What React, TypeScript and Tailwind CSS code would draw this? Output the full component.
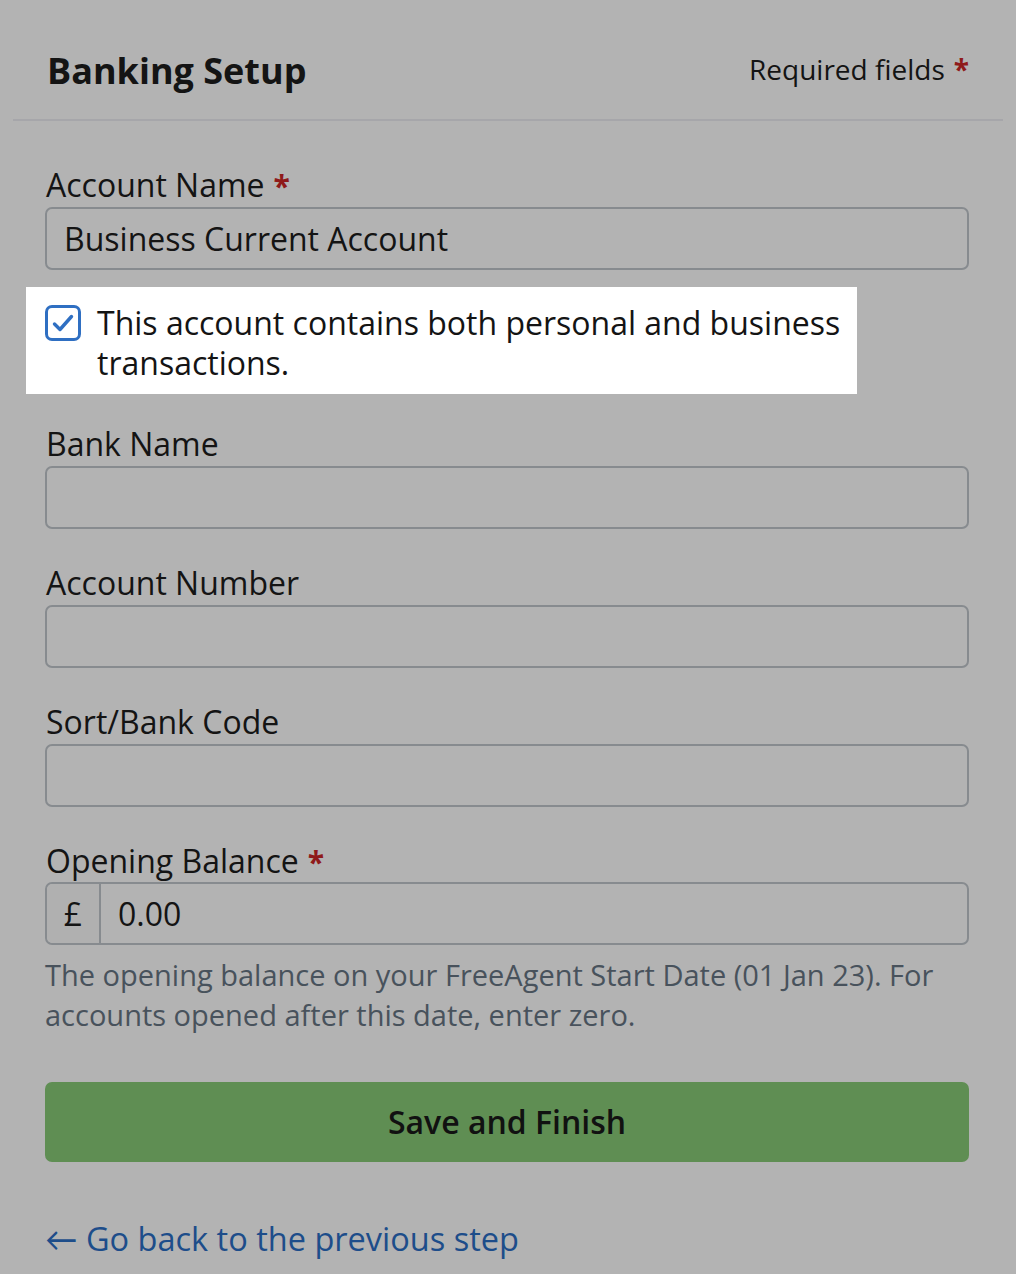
import React from "react";

function Label({ text, required }: { text: string; required?: boolean }) {
  return (
    <div className="h-[40px] leading-[40px] text-[32px] text-[#141414] ml-[1px]">
      {text}
      {required && <span className="ml-[9px] text-[#8f1a1a] font-bold text-[30px]">*</span>}
    </div>
  );
}

function Input({ value }: { value?: string }) {
  return (
    <div className="mt-[2px] h-[63px] rounded-[7px] border-2 border-[#878b8f] flex items-center px-[17px] text-[32px] text-[#141414]">
      {value}
    </div>
  );
}

export default function App() {
  return (
    <div
      className="w-[1016px] h-[1274px] bg-[#b3b3b3] overflow-hidden"
      style={{ fontFamily: "'Open Sans', Lato, sans-serif" }}
    >
      <div className="h-[121px] mx-[13px] border-b-2 border-[#a6a6aa] flex items-center justify-between pl-[34px] pr-[34px] pt-[22px]">
        <div className="text-[36px] font-bold text-[#141414]">Banking Setup</div>
        <div className="text-[28px] text-[#141414] -mt-[4px]">
          Required fields<span className="ml-[9px] text-[#8f1a1a] font-bold">*</span>
        </div>
      </div>

      <div className="pl-[45px] pr-[47px] pt-[44px]">
        <Label text="Account Name" required />
        <Input value="Business Current Account" />

        <div className="mt-[17px] -ml-[19px] w-[831px] bg-white pl-[19px] pt-[18px] pb-[11px] flex items-start">
          <div className="w-[36px] h-[36px] rounded-[7px] border-[3px] border-[#2f6fc2] flex items-center justify-center shrink-0">
            <svg width="24" height="20" viewBox="0 0 24 20" fill="none">
              <path d="M3.5 11 L9 16.5 L20.5 3.5" stroke="#2f6fc2" strokeWidth="3.4" strokeLinecap="round" strokeLinejoin="round" />
            </svg>
          </div>
          <div className="ml-[16px] text-[32px] leading-[40px] text-[#141414] w-[770px] -mt-[2px]">
            This account contains both personal and business transactions.
          </div>
        </div>

        <div className="mt-[30px]">
          <Label text="Bank Name" />
          <Input />
        </div>
        <div className="mt-[34px]">
          <Label text="Account Number" />
          <Input />
        </div>
        <div className="mt-[34px]">
          <Label text="Sort/Bank Code" />
          <Input />
        </div>
        <div className="mt-[34px]">
          <Label text="Opening Balance" required />
          <div className="mt-[1px] h-[63px] rounded-[7px] border-2 border-[#878b8f] flex items-stretch text-[32px] text-[#141414]">
            <div className="w-[54px] border-r-2 border-[#878b8f] flex items-center justify-center bg-[#b0b0b0] rounded-l-[6px]">
              £
            </div>
            <div className="flex items-center pl-[17px]">0.00</div>
          </div>
        </div>
        <div className="mt-[10px] text-[29px] leading-[40px] text-[#48525c] w-[924px]">
          The opening balance on your FreeAgent Start Date (01 Jan 23). For accounts opened after this date, enter zero.
        </div>

        <div className="mt-[47px] h-[80px] rounded-[7px] bg-[#5f8e53] flex items-center justify-center text-[32px] font-semibold text-[#111]">
          Save and Finish
        </div>

        <div className="mt-[57px] text-[32.5px] leading-[40px] text-[#1d4d8a]">
          ← Go back to the previous step
        </div>
      </div>
    </div>
  );
}
